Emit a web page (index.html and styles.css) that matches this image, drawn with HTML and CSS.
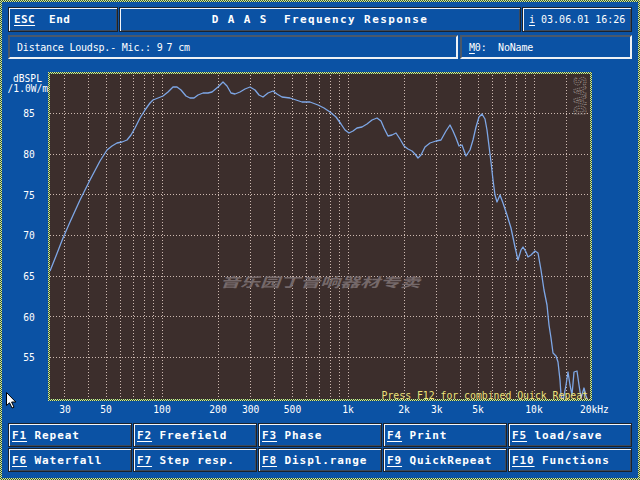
FILE: index.html
```html
<!DOCTYPE html>
<html>
<head>
<meta charset="utf-8">
<title>DAAS Frequency Response</title>
<link rel="stylesheet" href="styles.css">
</head>
<body>
<div class="screen">
  <div class="hdr">
    <div class="box raised esc"><span class="u">ESC</span>&nbsp;&nbsp;End</div>
    <div class="box raised title">D A A S  Frequency Response</div>
    <div class="box raised date"><span class="u">i</span> 03.06.01 16:26</div>
  </div>
  <div class="info">
    <div class="box sunken dist">Distance Loudsp.- Mic.: <span class="gap">9</span>7 cm</div>
    <div class="box sunken mo"><span class="u">M</span>0:  NoName</div>
  </div>
  <svg class="chart" width="624" height="356" viewBox="8 64 624 356" xmlns="http://www.w3.org/2000/svg">
    <defs>
      <pattern id="chk" width="2" height="2" patternUnits="userSpaceOnUse">
        <rect width="2" height="2" fill="#2a5640"/>
        <rect width="1" height="1" fill="#dfe98c"/>
        <rect x="1" y="1" width="1" height="1" fill="#dfe98c"/>
      </pattern>
      <clipPath id="plotclip"><rect x="50" y="74" width="540" height="325"/></clipPath>
    </defs>
    <rect class="plotbg" x="48" y="72" width="544" height="329"/>
    <g class="grid">
      <line x1="50" y1="113.5" x2="590" y2="113.5"/>
      <line x1="50" y1="154.5" x2="590" y2="154.5"/>
      <line x1="50" y1="194.5" x2="590" y2="194.5"/>
      <line x1="50" y1="235.5" x2="590" y2="235.5"/>
      <line x1="50" y1="276.5" x2="590" y2="276.5"/>
      <line x1="50" y1="316.5" x2="590" y2="316.5"/>
      <line x1="50" y1="357.5" x2="590" y2="357.5"/>
      <line x1="64.5" y1="75" x2="64.5" y2="399"/>
      <line x1="88.5" y1="75" x2="88.5" y2="399"/>
      <line x1="106.5" y1="75" x2="106.5" y2="399"/>
      <line x1="120.5" y1="75" x2="120.5" y2="399"/>
      <line x1="133.5" y1="75" x2="133.5" y2="399"/>
      <line x1="144.5" y1="75" x2="144.5" y2="399"/>
      <line x1="153.5" y1="75" x2="153.5" y2="399"/>
      <line x1="162.5" y1="75" x2="162.5" y2="399"/>
      <line x1="218.5" y1="75" x2="218.5" y2="399"/>
      <line x1="250.5" y1="75" x2="250.5" y2="399"/>
      <line x1="274.5" y1="75" x2="274.5" y2="399"/>
      <line x1="292.5" y1="75" x2="292.5" y2="399"/>
      <line x1="306.5" y1="75" x2="306.5" y2="399"/>
      <line x1="319.5" y1="75" x2="319.5" y2="399"/>
      <line x1="330.5" y1="75" x2="330.5" y2="399"/>
      <line x1="339.5" y1="75" x2="339.5" y2="399"/>
      <line x1="348.5" y1="75" x2="348.5" y2="399"/>
      <line x1="404.5" y1="75" x2="404.5" y2="399"/>
      <line x1="436.5" y1="75" x2="436.5" y2="399"/>
      <line x1="460.5" y1="75" x2="460.5" y2="399"/>
      <line x1="478.5" y1="75" x2="478.5" y2="399"/>
      <line x1="492.5" y1="75" x2="492.5" y2="399"/>
      <line x1="505.5" y1="75" x2="505.5" y2="399"/>
      <line x1="516.5" y1="75" x2="516.5" y2="399"/>
      <line x1="525.5" y1="75" x2="525.5" y2="399"/>
      <line x1="534.5" y1="75" x2="534.5" y2="399"/>
      <line x1="566.5" y1="75" x2="566.5" y2="399"/>
    </g>
    <text class="wm" x="220" y="287" textLength="200" lengthAdjust="spacingAndGlyphs">音乐园丁音响器材专卖</text>
    <text class="daas" transform="translate(586 115) rotate(-90)">DAAS</text>
    <polyline class="curve" clip-path="url(#plotclip)" points="50,271 56,256 63,238 70,222 80,200 90,180 100,161 107,150 112,146 117,143 122,142 127,140 131,135 135,128 140,118 145,110 150,103 153,100 158,98 163,96 168,92 173,87 177,87 181,90 186,96 190,98 194,98 198,95 203,93 208,93 212,92 218,87 223,82 227,86 231,93 235,94 240,92 245,89 250,87 255,90 259,95 263,97 268,93 273,91 277,94 282,97 290,98 296,100 302,102 310,102 318,105 324,108 330,112 336,117 341,124 345,130 349,133 353,131 357,128 362,127 367,124 372,120 377,118 381,121 384,128 388,136 392,135 396,133 400,139 404,146 408,149 412,151 415,154 418,158 421,155 425,147 430,143 436,141 441,140 446,131 450,125 453,131 456,138 459,146 462,145 466,156 470,150 473,140 476,127 479,117 482,114 485,119 487,130 489,146 491,162 493,180 495,195 497,202 500,195 503,203 507,215 511,228 515,247 518,260 521,250 523,247 526,252 528,257 531,255 535,251 538,253 541,270 544,290 547,305 549,325 551,338 553,353 556,356 558,362 560,380 561,395 563,401 566,385 568,372 570,385 572,395 574,372 577,371 579,385 581,398 584,388 586,396 588,401"/>
    <rect class="frame" x="49" y="73" width="542" height="327"/>
    <text class="ax" x="27.5" y="82">dBSPL</text>
    <text class="ax" x="27.8" y="91.5">/1.0W/m</text>
    <text class="ax" x="29" y="117">85</text>
    <text class="ax" x="29" y="158">80</text>
    <text class="ax" x="29" y="198.5">75</text>
    <text class="ax" x="29" y="239">70</text>
    <text class="ax" x="29" y="280">65</text>
    <text class="ax" x="29" y="320.5">60</text>
    <text class="ax" x="29" y="361">55</text>
    <text class="ax" x="65" y="413">30</text>
    <text class="ax" x="106" y="413">50</text>
    <text class="ax" x="162" y="413">100</text>
    <text class="ax" x="218" y="413">200</text>
    <text class="ax" x="250.7" y="413">300</text>
    <text class="ax" x="292.5" y="413">500</text>
    <text class="ax" x="348" y="413">1k</text>
    <text class="ax" x="404" y="413">2k</text>
    <text class="ax" x="436.7" y="413">3k</text>
    <text class="ax" x="478" y="413">5k</text>
    <text class="ax" x="534" y="413">10k</text>
    <text class="ax start" x="580" y="413">20kHz</text>
    <text class="press" x="588" y="399">Press F12 for combined Quick Repeat</text>
  </svg>
  <div class="fkeys">
    <div class="box raised fk"><span class="u">F1</span> Repeat</div>
    <div class="box raised fk"><span class="u">F2</span> Freefield</div>
    <div class="box raised fk"><span class="u">F3</span> Phase</div>
    <div class="box raised fk"><span class="u">F4</span> Print</div>
    <div class="box raised fk"><span class="u">F5</span> load/save</div>
    <div class="box raised fk"><span class="u">F6</span> Waterfall</div>
    <div class="box raised fk"><span class="u">F7</span> Step resp.</div>
    <div class="box raised fk"><span class="u">F8</span> Displ.range</div>
    <div class="box raised fk"><span class="u">F9</span> QuickRepeat</div>
    <div class="box raised fk"><span class="u">F10</span> Functions</div>
  </div>
  <svg class="cursor" width="12" height="18" viewBox="0 0 12 18" xmlns="http://www.w3.org/2000/svg">
    <path d="M0.5 0.5 L0.5 13.5 L3.5 10.8 L6 16 L8 15.2 L5.6 10 L9.8 10 Z" fill="#ffffff" stroke="#000000" stroke-width="1"/>
  </svg>
</div>
</body>
</html>
```
FILE: styles.css
```css
html, body {
  margin: 0;
  padding: 0;
  background: #0b52a4;
}

.screen {
  position: relative;
  width: 640px;
  height: 480px;
  box-sizing: border-box;
  border: 2px solid transparent;
  padding: 5px 6px 6px 6px;
  overflow: hidden;
  background:
    linear-gradient(#0b52a4, #0b52a4) padding-box,
    repeating-conic-gradient(#dfe98c 0 25%, #2a5640 0 50%) 0 0 / 2px 2px border-box;
  font-family: "DejaVu Sans Mono", "Liberation Mono", monospace;
  color: #ffffff;
}

.box {
  box-sizing: border-box;
  display: flex;
  align-items: center;
  white-space: pre;
  overflow: hidden;
}

.raised {
  border: 1px solid #1b222c;
  box-shadow: inset 1px 1px 0 #f4f6fa, inset -1px -1px 0 #3b4a5e;
}

.sunken {
  border: 2px solid;
  border-color: #4b5869 #eef2f6 #eef2f6 #4b5869;
}

.u {
  text-decoration: underline;
  text-underline-offset: 2px;
  text-decoration-thickness: 1px;
}

.gap {
  margin-right: 4px;
}

.hdr {
  display: grid;
  grid-template-columns: 110px 1fr 110px;
  gap: 1px;
  height: 25px;
}

.esc {
  padding-left: 5px;
  font-size: 11px;
  font-weight: bold;
  letter-spacing: 0.4px;
}

.title {
  justify-content: center;
  font-size: 11px;
  font-weight: bold;
  letter-spacing: 1.4px;
}

.date {
  padding-left: 6px;
  font-size: 10px;
  letter-spacing: 0px;
}

.info {
  display: grid;
  grid-template-columns: 450px 1fr;
  gap: 2px;
  height: 24px;
  margin-top: 3px;
}

.dist, .mo {
  padding-left: 7px;
  font-size: 10px;
  letter-spacing: -0.2px;
}

.chart {
  display: block;
  margin-top: 5px;
}

.plotbg {
  fill: #3c2e2c;
}

.frame {
  fill: none;
  stroke: url(#chk);
  stroke-width: 2;
}

.grid line {
  stroke: #cdb9b1;
  stroke-width: 1;
  stroke-dasharray: 1 2;
}

.curve {
  fill: none;
  stroke: #7ea7e6;
  stroke-width: 1.3;
  stroke-linejoin: round;
}

.ax {
  font-family: "DejaVu Sans Mono", "Liberation Mono", monospace;
  font-size: 9.6px;
  fill: #ffffff;
  text-anchor: middle;
}

.ax.start {
  text-anchor: start;
}

.press {
  font-family: "DejaVu Sans Mono", "Liberation Mono", monospace;
  font-size: 9.8px;
  fill: #ece27a;
  text-anchor: end;
}

.wm {
  font-family: "Noto Sans CJK SC", sans-serif;
  font-size: 13px;
  font-weight: bold;
  font-style: italic;
  fill: #75696a;
}

.daas {
  font-family: "DejaVu Sans Mono", monospace;
  font-size: 16px;
  font-weight: bold;
  fill: none;
  stroke: #978a85;
  stroke-width: 1;
  stroke-dasharray: 1 1;
}

.fkeys {
  display: grid;
  grid-template-columns: repeat(5, 1fr);
  grid-template-rows: 24px 24px;
  gap: 1px;
  margin-top: 3px;
}

.fk {
  padding-left: 3px;
  font-size: 11px;
  font-weight: bold;
  letter-spacing: 0.9px;
}

.cursor {
  position: absolute;
  left: 4px;
  top: 390px;
}
```
